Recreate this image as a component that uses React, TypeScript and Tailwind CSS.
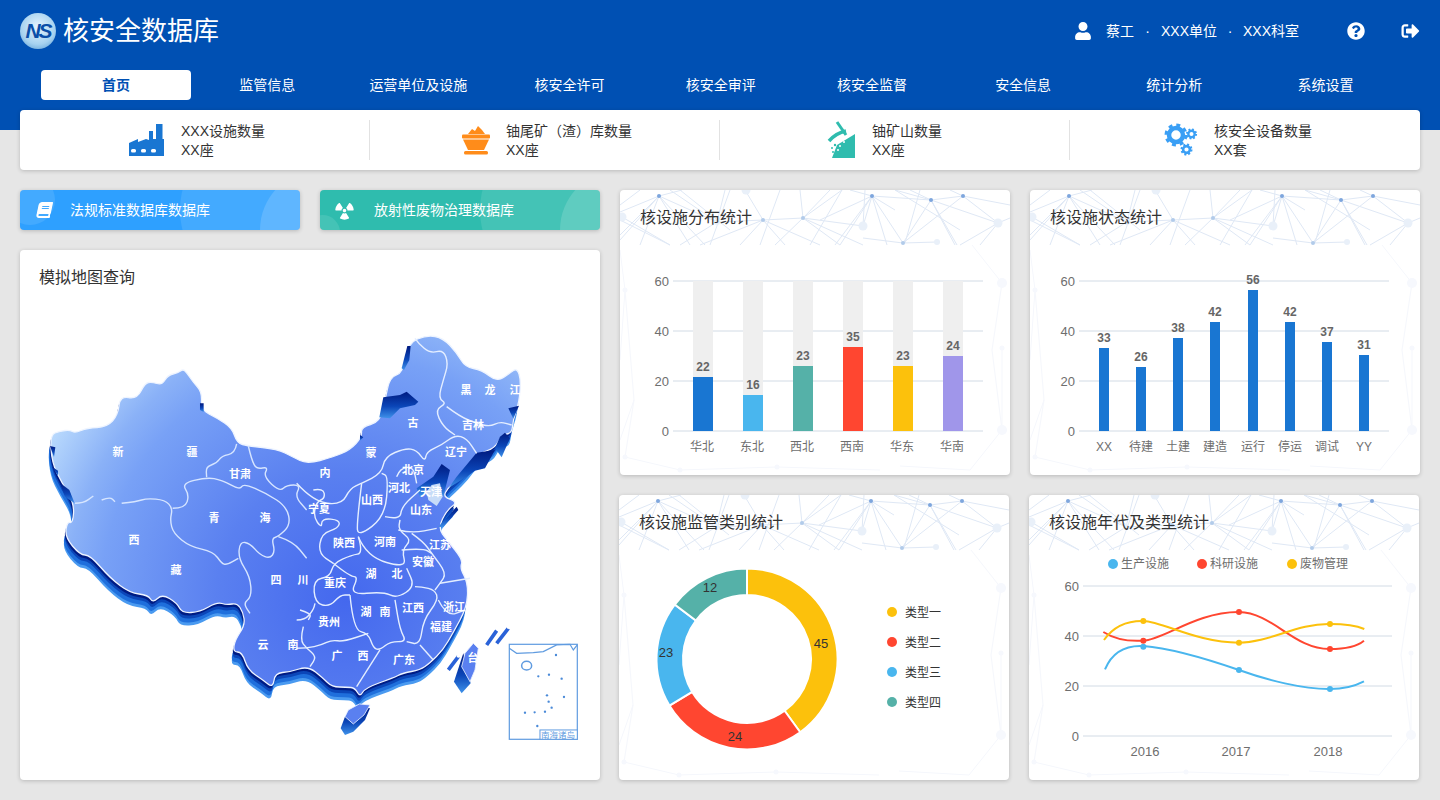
import { FaBook, FaQuestionCircle, FaRadiation, FaSignOutAlt, FaUser } from "react-icons/fa";

const navItems = ["首页", "监管信息", "运营单位及设施", "核安全许可", "核安全审评", "核安全监督", "安全信息", "统计分析", "系统设置"];

// map outline in page coordinates
const outline =
  "50,435 60,431 70,430 75,433 87,428 107,427 118,415 120,396 137,399 145,383 152,382 162,385 168,375 178,373 183,369 187,373 193,382 202,392 201,410 217,418 232,428 237,443 248,446 277,449 293,457 307,464 333,457 350,450 362,437 361,427 380,422 385,400 390,377 403,373 408,343 427,335 443,338 457,353 465,367 482,370 497,382 510,373 517,368 521,380 519,403 513,420 512,433 502,435 495,448 480,453 470,467 457,480 448,488 443,497 458,502 447,510 438,528 447,540 463,560 460,568 468,583 467,607 453,633 443,650 430,663 420,670 403,673 393,678 365,688 360,697 355,688 347,687 332,687 323,678 308,666 290,672 275,673 273,688 263,680 248,670 242,652 233,652 235,640 245,625 243,612 237,603 227,605 217,602 200,612 182,613 177,603 162,594 153,603 148,595 130,593 110,578 90,555 80,555 65,537 67,522 73,523 74,503 62,483 52,463";

const westLines = [
  "135,550 160,550 190,528",
  "215,540 240,530 255,545",
  "275,550 320,545 350,535 405,540 428,565 420,600 430,640 480,680 550,695 575,730 590,735 625,715",
  "428,565 465,565 478,525 455,490 530,472 575,480 630,510 640,490 710,520 770,560 782,615 745,650 725,655 735,695 720,715 690,705 660,670 630,665 625,715 660,770 665,830 640,850 660,880",
  "620,372 615,400 575,408 560,430 528,440 530,472",
  "655,378 665,420 680,448 715,440 700,470 750,515 770,495 812,495 795,530 830,570",
  "745,650 790,665 830,715",
];

const eastLines = [
  "-10,490 40,545 125,555 150,505 185,490 245,460 255,410 315,385 350,390 375,425 380,395 425,375 465,345 500,355 530,400",
  "345,55 355,70 390,100 430,90 445,130 430,180 415,235 440,250 405,270 430,320 465,345",
  "440,260 480,290 530,310 570,320 600,305 635,315",
  "40,510 70,505 75,535 50,545 40,590 65,625 65,595 120,600 115,625 65,640 55,700 100,730",
  "185,490 170,610 175,650 255,590 265,470 245,460",
  "255,590 300,600 305,560 360,510",
  "290,470 300,445 340,440 350,490",
  "175,650 190,700 155,705 100,730 90,770 40,780 45,850 90,860 120,825 150,825",
  "175,650 200,710 320,745 305,690 335,660 295,630 300,600",
  "295,630 335,640 410,625",
  "335,640 370,665 395,700 440,760 420,790 405,810",
  "305,690 370,685 395,700",
  "100,730 150,770 175,770 150,825 250,815 290,835 345,800 320,745",
  "345,800 365,800 405,810 415,840 370,900 360,975 320,965",
  "150,825 160,930 205,940 220,985 240,990 270,965 320,965 300,930 285,840",
  "420,790 510,775",
  "415,840 440,890 495,870",
  "360,975 400,1020",
  "240,990 170,1100",
  "-10,985 20,985 65,975 95,960 130,965 205,940",
  "-10,900 15,900 40,870 45,850",
  "0,870 35,880 25,900",
  "10,920 0,960 20,985 50,1010 30,1040",
];

// rounds the corners of a point list so borders read as drawn coast, not straight cuts
function smooth(points: string, closed = false) {
  const p = points.trim().split(/\s+/).map((s) => s.split(",").map(Number));
  const mid = (a: number[], b: number[]) => `${(a[0] + b[0]) / 2} ${(a[1] + b[1]) / 2}`;
  if (closed) {
    let d = `M${mid(p[p.length - 1], p[0])}`;
    p.forEach((pt, i) => {
      d += ` Q${pt[0]} ${pt[1]} ${mid(pt, p[(i + 1) % p.length])}`;
    });
    return d + " Z";
  }
  let d = `M${p[0][0]} ${p[0][1]}`;
  for (let i = 1; i < p.length - 1; i++) {
    d += ` Q${p[i][0]} ${p[i][1]} ${mid(p[i], p[i + 1])}`;
  }
  return d + ` L${p[p.length - 1][0]} ${p[p.length - 1][1]}`;
}

const labels: [string, number, number][] = [
  ["新", 118, 452], ["疆", 192, 452], ["甘肃", 240, 474], ["青", 214, 518], ["海", 265, 518], ["西", 134, 540], ["藏", 176, 570],
  ["四", 276, 580], ["川", 303, 580], ["内", 325, 473], ["蒙", 371, 453], ["古", 413, 423], ["黑", 466, 390], ["龙", 490, 390],
  ["江", 515, 390], ["吉林", 473, 425], ["辽宁", 456, 452], ["北京", 413, 470], ["河北", 399, 488], ["天津", 431, 492],
  ["山西", 372, 500], ["宁夏", 319, 509], ["山东", 421, 510], ["陕西", 344, 543], ["河南", 385, 542], ["江苏", 440, 545],
  ["安徽", 423, 562], ["湖", 371, 574], ["北", 397, 574], ["重庆", 335, 583], ["江西", 413, 608], ["湖", 366, 612], ["南", 385, 612],
  ["贵州", 329, 622], ["浙江", 454, 607], ["福建", 441, 627], ["云", 263, 645], ["南", 293, 645], ["广", 337, 656], ["西", 363, 656],
  ["广东", 404, 660], ["台", 473, 658],
];

const darkBays = [
  "M250,232 L300,225 L320,215 L355,245 L345,255 L300,265 L270,295 L238,292 Z",
  "M322,78 L332,78 L328,120 L312,150 L305,145 Z",
  "M180,345 L190,352 L180,362 Z",
  "M625,265 L657,257 L640,296 Z",
  "M600,350 L615,338 L630,355 L605,412 L585,385 Z",
  "M530,398 L585,390 L555,445 L525,452 L500,470 L445,505 L470,470 Z",
  "M350,505 L400,470 L425,432 L450,450 L430,530 L395,500 L360,530 Z",
  "M470,560 L475,570 L430,622 L415,620 Z",
];

const network: [number, number, number, number][] = [
  [39, 6, 0, 22], [39, 6, 62, 0], [39, 6, 97, 32], [39, 6, 70, 55], [39, 6, 20, 55], [97, 32, 143, 30], [143, 30, 183, 28], [143, 30, 125, 0],
  [143, 30, 165, 55], [143, 30, 120, 55], [183, 28, 180, 0], [183, 28, 222, 0], [183, 28, 243, 55], [183, 28, 155, 55], [252, 6, 230, 0],
  [252, 6, 311, 10], [252, 6, 220, 55], [252, 6, 283, 53], [311, 10, 343, 6], [311, 10, 283, 53], [311, 10, 275, 0], [311, 10, 335, 55],
  [311, 10, 378, 33], [343, 6, 378, 33], [343, 6, 330, 0], [378, 33, 340, 55], [378, 33, 390, 28], [243, 36, 183, 28], [243, 36, 252, 6],
  [2, 27, 50, 55], [97, 32, 60, 55], [97, 32, 50, 0], [283, 53, 243, 48], [283, 53, 317, 52], [0, 45, 39, 6], [222, 0, 190, 55], [97, 32, 105, 0],
  [39, 6, 0, 50], [39, 6, 85, 55], [143, 30, 80, 55], [143, 30, 200, 55], [183, 28, 220, 55], [252, 6, 215, 55], [252, 6, 267, 55],
  [343, 6, 283, 53], [311, 10, 290, 0], [311, 10, 337, 55], [378, 33, 360, 55], [343, 6, 390, 15], [252, 6, 200, 30], [183, 28, 210, 0],
  [252, 6, 275, 20], [275, 0, 340, 40], [60, 0, 110, 40], [20, 0, 0, 15], [0, 30, 50, 55], [110, 0, 90, 55], [160, 0, 140, 55],
  [245, 0, 243, 36], [300, 0, 285, 53],
];

const faintNetwork: [number, number, number, number][] = [
  [5, 100, 14, 210], [5, 100, 0, 170], [14, 210, 0, 250], [14, 210, 5, 267], [5, 267, 60, 280], [60, 280, 157, 277], [157, 277, 260, 280],
  [382, 93, 372, 160], [382, 93, 352, 55], [382, 158, 382, 240], [382, 240, 350, 280], [372, 160, 382, 240], [350, 280, 280, 276], [0, 60, 5, 100],
];

function Network() {
  return (
    <svg className="absolute inset-0 w-full h-full pointer-events-none" viewBox="0 0 390 285">
      {faintNetwork.map((l, i) => (
        <line key={i} x1={l[0]} y1={l[1]} x2={l[2]} y2={l[3]} stroke="#f5f7fc" strokeWidth="1" />
      ))}
      {[[382, 93], [382, 240], [382, 158], [5, 100], [60, 280], [157, 277], [5, 267]].map((p, i) => (
        <circle key={i} cx={p[0]} cy={p[1]} r={i < 2 ? 5 : 2.5} fill="#f6f8fd" />
      ))}
      {network.map((l, i) => (
        <line key={i} x1={l[0]} y1={l[1]} x2={l[2]} y2={l[3]} stroke="#dfe8f5" strokeWidth="1" />
      ))}
      {[[39, 6], [252, 6], [311, 10], [343, 6]].map((p, i) => (
        <circle key={i} cx={p[0]} cy={p[1]} r="2" fill="#7ea6dd" />
      ))}
      {[[143, 30], [183, 28], [283, 53]].map((p, i) => (
        <circle key={i} cx={p[0]} cy={p[1]} r="2" fill="#b2cbea" />
      ))}
      {[[243, 36], [378, 33], [126, 0], [2, 27], [317, 52], [97, 32]].map((p, i) => (
        <circle key={i} cx={p[0]} cy={p[1]} r={i < 4 ? 4.5 : 3} fill="#e9f0f9" />
      ))}
    </svg>
  );
}

function ChartCard({ title, children }: { title: string; children: React.ReactNode }) {
  return (
    <div className="relative h-[285px] bg-white rounded shadow-[0_1px_4px_rgba(0,0,0,0.2)] overflow-hidden">
      <Network />
      <h3 className="relative h-[55px] flex items-center pl-5 text-base text-[#333]">{title}</h3>
      <div className="relative">{children}</div>
    </div>
  );
}

function Axis({ x1, x2, ys }: { x1: number; x2: number; ys: [string, number][] }) {
  return (
    <g>
      {ys.map(([t, y]) => (
        <g key={t}>
          <line x1={x1} x2={x2} y1={y} y2={y} stroke="#d2dbe5" />
          <text x={x1 - 4} y={y + 4.5} textAnchor="end" fontSize="13" fill="#6e6e6e">{t}</text>
        </g>
      ))}
    </g>
  );
}

function DistributionChart() {
  const bars = [
    { name: "华北", v: "22", x: 693, top: 377, c: "#1976d2" },
    { name: "东北", v: "16", x: 743, top: 395, c: "#49b6ee" },
    { name: "西北", v: "23", x: 793, top: 366, c: "#55b1a8" },
    { name: "西南", v: "35", x: 843, top: 347, c: "#ff4630" },
    { name: "华东", v: "23", x: 893, top: 366, c: "#fcc10c" },
    { name: "华南", v: "24", x: 943, top: 356, c: "#a096ea" },
  ];
  return (
    <svg className="block" width="390" height="230" viewBox="620 245 390 230">
      <Axis x1={673} x2={983} ys={[["60", 281], ["40", 331], ["20", 381], ["0", 431]]} />
      {bars.map((b) => (
        <g key={b.name}>
          <rect x={b.x} y={281} width={20} height={150} fill="#efefef" />
          <rect x={b.x} y={b.top} width={20} height={431 - b.top} fill={b.c} />
          <text x={b.x + 10} y={b.top - 6} textAnchor="middle" fontSize="12" fontWeight="700" fill="#666">{b.v}</text>
          <text x={b.x + 9} y={451} textAnchor="middle" fontSize="12" fill="#6e6e6e">{b.name}</text>
        </g>
      ))}
    </svg>
  );
}

function StatusChart() {
  const bars = [
    { name: "XX", v: "33", x: 1099, top: 348 },
    { name: "待建", v: "26", x: 1136, top: 367 },
    { name: "土建", v: "38", x: 1173, top: 338 },
    { name: "建造", v: "42", x: 1210, top: 322 },
    { name: "运行", v: "56", x: 1248, top: 290 },
    { name: "停运", v: "42", x: 1285, top: 322 },
    { name: "调试", v: "37", x: 1322, top: 342 },
    { name: "YY", v: "31", x: 1359, top: 355 },
  ];
  return (
    <svg className="block" width="390" height="230" viewBox="1030 245 390 230">
      <Axis x1={1079} x2={1389} ys={[["60", 281], ["40", 331], ["20", 381], ["0", 431]]} />
      {bars.map((b) => (
        <g key={b.name}>
          <rect x={b.x} y={b.top} width={10} height={431 - b.top} fill="#1976d2" />
          <text x={b.x + 5} y={b.top - 6} textAnchor="middle" fontSize="12" fontWeight="700" fill="#666">{b.v}</text>
          <text x={b.x + 5} y={451} textAnchor="middle" fontSize="12" fill="#6e6e6e">{b.name}</text>
        </g>
      ))}
    </svg>
  );
}

function arc(a0: number, a1: number) {
  const cx = 747, cy = 659, R = 90.5, r = 64;
  const p = (rad: number, a: number) => {
    const t = (a * Math.PI) / 180;
    return `${(cx + rad * Math.sin(t)).toFixed(2)} ${(cy - rad * Math.cos(t)).toFixed(2)}`;
  };
  const large = a1 - a0 > 180 ? 1 : 0;
  return `M${p(R, a0)} A${R} ${R} 0 ${large} 1 ${p(R, a1)} L${p(r, a1)} A${r} ${r} 0 ${large} 0 ${p(r, a0)} Z`;
}

function DonutChart() {
  const segs = [
    { a: 0, b: 144, c: "#fcc10c" },
    { a: 144, b: 239, c: "#ff4630" },
    { a: 239, b: 307, c: "#49b6ee" },
    { a: 307, b: 360, c: "#55b1a8" },
  ];
  const values: [string, number, number][] = [["45", 821, 643], ["24", 735, 736], ["23", 666, 652], ["12", 710, 587]];
  const legend: [string, string, number][] = [["类型一", "#fcc10c", 612], ["类型二", "#ff4630", 642], ["类型三", "#49b6ee", 672], ["类型四", "#55b1a8", 702]];
  return (
    <svg className="block" width="390" height="230" viewBox="619 550 390 230">
      {segs.map((s) => (
        <path key={s.c} d={arc(s.a, s.b)} fill={s.c} stroke="#fff" strokeWidth="2" />
      ))}
      {values.map(([t, x, y]) => (
        <text key={t} x={x} y={y + 4.5} textAnchor="middle" fontSize="13" fill="#333">{t}</text>
      ))}
      {legend.map(([t, c, y]) => (
        <g key={t}>
          <circle cx={892} cy={y} r={5} fill={c} />
          <text x={905} y={y + 5} fontSize="12" fill="#333">{t}</text>
        </g>
      ))}
    </svg>
  );
}

function LineChart() {
  const legend: [string, string, number][] = [["生产设施", "#49b6ee", 1113], ["科研设施", "#ff4630", 1202], ["废物管理", "#fcc10c", 1292]];
  const lines = [
    { c: "#49b6ee", d: "M225,538 C245,490 285,465 340,468 C430,475 540,510 627,540 C710,570 820,598 900,597 C940,597 975,588 1002,574", pts: [[340, 470], [627, 540], [900, 597]] },
    { c: "#ff4630", d: "M220,426 C250,445 295,455 340,452 C400,450 500,365 627,366 C730,368 790,478 900,477 C945,477 980,470 1002,452", pts: [[340, 452], [627, 366], [900, 477]] },
    { c: "#fcc10c", d: "M222,450 C250,410 290,392 340,393 C400,395 500,458 627,458 C720,458 800,400 900,402 C945,402 975,405 1003,417", pts: [[340, 393], [627, 458], [900, 402]] },
  ];
  return (
    <svg className="block" width="390" height="230" viewBox="1029 550 390 230">
      <Axis x1={1083} x2={1392} ys={[["60", 586], ["40", 636], ["20", 686], ["0", 736]]} />
      {legend.map(([t, c, x]) => (
        <g key={t}>
          <circle cx={x} cy={564} r={5} fill={c} />
          <text x={x + 8} y={568} fontSize="12" fill="#6e6e6e">{t}</text>
        </g>
      ))}
      <g transform="translate(1030,490) scale(0.3333)">
        {lines.map((l) => (
          <g key={l.c}>
            <path d={l.d} fill="none" stroke={l.c} strokeWidth="6" />
            {l.pts.map((p) => (
              <circle key={p[0]} cx={p[0]} cy={p[1]} r="9" fill={l.c} />
            ))}
          </g>
        ))}
      </g>
      {[["2016", 1145], ["2017", 1236], ["2018", 1328]].map(([t, x]) => (
        <text key={t} x={x} y={756} textAnchor="middle" fontSize="13" fill="#6e6e6e">{t}</text>
      ))}
    </svg>
  );
}

function ChinaMap() {
  const land = smooth(outline, true);
  return (
    <svg className="block" width="580" height="475" viewBox="20 305 580 475">
      <defs>
        <radialGradient id="land" gradientUnits="userSpaceOnUse" cx="345" cy="600" r="340">
          <stop offset="0" stopColor="#4468ee" />
          <stop offset="0.38" stopColor="#5a80f0" />
          <stop offset="0.72" stopColor="#78a1f6" />
          <stop offset="0.82" stopColor="#8ab1f7" />
          <stop offset="1" stopColor="#bcdcfd" />
        </radialGradient>
        <linearGradient id="bay" x1="0" y1="0" x2="0" y2="1">
          <stop offset="0" stopColor="#001a80" />
          <stop offset="0.55" stopColor="#0b46b8" />
          <stop offset="1" stopColor="#3f92ea" />
        </linearGradient>
      </defs>
      <path d={land} transform="translate(-2,13)" fill="#4a9af0" />
      <path d={land} transform="translate(-2,10)" fill="#1f6fdc" />
      <path d={land} transform="translate(-1,6)" fill="#0b46b8" />
      <path d={land} transform="translate(-1,3)" fill="#001c84" />
      <path d={land} fill="url(#land)" stroke="#eef4ff" strokeWidth="1.3" strokeLinejoin="round" />
      {/* small dark notches along the west edge */}
      <g transform="translate(30,320) scale(0.3333)" fill="url(#bay)">
        <path d="M60,378 L76,382 L72,412 Z" />
        <path d="M66,440 L84,452 L84,468 Z" />
        <path d="M90,488 L118,510 L134,550 L105,530 Z" />
        <path d="M510,250 L521,250 L521,276 L510,270 Z" />
      </g>
      <g transform="translate(30,320) scale(0.3333)" fill="none" stroke="#d6e5ff" strokeWidth="4.2" strokeLinejoin="round">
        {westLines.map((d) => (
          <path key={d} d={smooth(d)} />
        ))}
      </g>
      <g transform="translate(300,320) scale(0.3333)">
        {darkBays.map((d) => (
          <path key={d} d={d} fill="url(#bay)" />
        ))}
        <path d="M395,495 L420,490 L428,530 L410,558 L385,540 L380,515 Z" fill="#c7dcf8" />
        <g fill="none" stroke="#e4eeff" strokeWidth="4.2" strokeLinejoin="round">
          {eastLines.map((d) => (
            <path key={d} d={smooth(d)} />
          ))}
        </g>
        {/* hainan */}
        <path d="M135,1190 L178,1160 L210,1165 L195,1200 L160,1235 L135,1245 L122,1225 Z" fill="url(#bay)" />
        <path d="M145,1170 L178,1152 L210,1155 L192,1185 L160,1212 L135,1190 Z" fill="#5a80f0" stroke="#eaf2ff" strokeWidth="2.5" />
        {/* taiwan and islets */}
        <path d="M490,1000 L462,1085 L485,1120 L512,1090 Z" fill="url(#bay)" />
        <path d="M520,970 L535,985 L525,1050 L510,1085 L485,1040 L495,1000 Z" fill="#5a80f0" stroke="#eaf2ff" strokeWidth="2.5" />
        <path d="M560,975 L590,932 M590,970 L625,925 M445,1050 L475,1010" stroke="#2a62d8" strokeWidth="11" fill="none" />
        <path d="M590,930 L594,926 M622,925 L626,921 M472,1012 L477,1007" stroke="#fff" strokeWidth="7" />
        {/* south china sea inset */}
        <rect x="628" y="973" width="204" height="285" fill="#fff" stroke="#5f9be0" strokeWidth="3.6" />
        <path d="M628,985 L650,1000 L700,998 L730,995 L770,975 L810,973 L820,990 L832,975" fill="none" stroke="#5f9be0" strokeWidth="3.6" />
        <ellipse cx="680" cy="1037" rx="15" ry="13" fill="none" stroke="#5f9be0" strokeWidth="4.5" />
        {[[768, 1005], [715, 1069], [747, 1064], [785, 1076], [741, 1126], [792, 1131], [746, 1145], [755, 1163], [735, 1175], [704, 1177], [675, 1178], [712, 1218]].map((p) => (
          <circle key={p[0] + "-" + p[1]} cx={p[0]} cy={p[1]} r="3.5" fill="#4a8ad8" />
        ))}
        <rect x="720" y="1230" width="112" height="28" fill="#fff" stroke="#5f9be0" strokeWidth="3" />
      </g>
      <text x="558" y="737.5" textAnchor="middle" fontSize="8.5" fill="#5f9be0">南海诸岛</text>
      {labels.map(([t, x, y]) => (
        <text key={t + x} x={x} y={y + 4} textAnchor="middle" fontSize="11" fontWeight="700" fill="#fff">{t}</text>
      ))}
    </svg>
  );
}

function FactoryIcon() {
  return (
    <svg width="35" height="32" viewBox="0 0 35 32" fill="#1976d2">
      <path d="M0 32 V19 L9 15 V18 L17 15 L20 16 V7 H24 V15 H27 V0 H33.5 V15 H35 V32 Z" />
      <rect x="2" y="25" width="5" height="3.5" rx="1.5" fill="#fff" />
      <rect x="12" y="25" width="5" height="3.5" rx="1.5" fill="#fff" />
      <rect x="22" y="25" width="5" height="3.5" rx="1.5" fill="#fff" />
    </svg>
  );
}

function CartIcon() {
  return (
    <svg width="30" height="32" viewBox="0 0 30 30" fill="#ff8c1a">
      <path d="M7 9 L11 4 L14 6 L17 1 L21 5 L24 9 Z" />
      <rect x="1" y="9.5" width="28" height="4" rx="1" />
      <path d="M2 14.5 H28 L23 25 H7 Z" />
      <rect x="3" y="26" width="24" height="3.5" rx="1.5" />
    </svg>
  );
}

function MineIcon() {
  return (
    <svg width="30" height="40" viewBox="12 5 30 40" fill="#2fbcae">
      <path d="M40 19 V43 H17 L22 30 Z" />
      <path d="M22 7 L31 20" stroke="#2fbcae" strokeWidth="3" />
      <path d="M14 26 Q21 18 31 16" stroke="#2fbcae" strokeWidth="3.5" fill="none" />
      <g fill="#fff">
        <circle cx="25" cy="31" r="1" />
        <circle cx="29" cy="27" r="1" />
        <circle cx="23" cy="35" r="1" />
      </g>
      <circle cx="20" cy="30" r="1.2" />
      <circle cx="17" cy="33" r="1" />
      <circle cx="18" cy="37" r="1" />
    </svg>
  );
}

function Gear({ x, y, r, w }: { x: number; y: number; r: number; w: number }) {
  const tooth = (2 * Math.PI * (r + w * 0.5)) / 16;
  return (
    <g fill="none" stroke="#3a9ff5">
      <circle cx={x} cy={y} r={r} strokeWidth={w} />
      <circle cx={x} cy={y} r={r + w * 0.5} strokeWidth={w} strokeDasharray={`${tooth} ${tooth}`} />
    </g>
  );
}

function GearsIcon() {
  return (
    <svg width="34" height="34" viewBox="0 0 34 34">
      <Gear x={12} y={12} r={7} w={4.5} />
      <Gear x={27.5} y={11} r={3.2} w={2.4} />
      <Gear x={22.5} y={26.5} r={3.4} w={2.6} />
    </svg>
  );
}

function Stat({ pad, gap, icon, line1, line2 }: { pad: string; gap: string; icon: React.ReactNode; line1: string; line2: string }) {
  return (
    <div className={`w-[350px] shrink-0 h-10 flex items-center ${pad} ${gap} border-r border-[#e2e2e2] last:border-r-0`}>
      {icon}
      <div className="pt-0.5 text-sm leading-[19px] text-[#333]">
        <div>{line1}</div>
        <div>{line2}</div>
      </div>
    </div>
  );
}

export default function App() {
  return (
    <div className="h-[800px] overflow-hidden bg-[#e6e6e6] font-['Liberation_Sans','Noto_Sans_CJK_SC',sans-serif]">
      <header className="h-[130px] bg-[#0050b3] text-white">
        <div className="h-[62px] flex items-center pl-5 pr-5">
          <div className="w-9 h-9 rounded-full bg-[radial-gradient(circle_at_50%_40%,#e8f5fe,#a6d2f0_60%,#4a92cf)] flex items-center justify-center text-[21px] font-bold italic tracking-[-2px] text-[#0a4ea8]">
            NS
          </div>
          <div className="ml-[7px] text-[26px]">核安全数据库</div>
          <div className="ml-auto flex items-center text-sm">
            <FaUser className="w-4 h-[18px]" />
            <span className="ml-[15px]">蔡工</span>
            <span className="w-[27px] text-center">·</span>
            <span>XXX单位</span>
            <span className="w-[26px] text-center">·</span>
            <span>XXX科室</span>
            <FaQuestionCircle className="ml-12 w-[18px] h-[18px]" />
            <FaSignOutAlt className="ml-9 w-[19px] h-[18px]" />
          </div>
        </div>
        <nav className="pl-[41px] pt-2 flex text-sm">
          {navItems.map((item, i) => (
            <div key={item} className="w-[151.2px]">
              <div className={`w-[150px] h-[30px] flex items-center justify-center rounded ${i === 0 ? "bg-white text-[#0050b3] font-bold" : ""}`}>
                {item}
              </div>
            </div>
          ))}
        </nav>
      </header>

      <section className="relative mx-5 -mt-5 h-[60px] flex items-center bg-white rounded shadow-[0_1px_4px_rgba(0,0,0,0.2)]">
        <Stat pad="pl-[109px]" gap="gap-[17px]" icon={<FactoryIcon />} line1="XXX设施数量" line2="XX座" />
        <Stat pad="pl-[91px]" gap="gap-[15px]" icon={<CartIcon />} line1="铀尾矿（渣）库数量" line2="XX座" />
        <Stat pad="pl-[107px]" gap="gap-[15px]" icon={<MineIcon />} line1="铀矿山数量" line2="XX座" />
        <Stat pad="pl-[94px]" gap="gap-4" icon={<GearsIcon />} line1="核安全设备数量" line2="XX套" />
      </section>

      <main className="flex gap-5 px-5 pt-5">
        <div className="w-[580px] flex flex-col gap-5">
          <div className="flex gap-5 text-sm text-white">
            <div className="relative w-[280px] h-10 flex items-center pl-[50px] rounded bg-[#2ea0ff] shadow-[0_1px_4px_rgba(0,0,0,0.2)] overflow-hidden">
              <div className="absolute left-[-15px] top-[-15px] w-[50px] h-[50px] rounded-full bg-white/10" />
              <div className="absolute left-[160px] top-[-60px] w-[160px] h-[160px] rounded-full bg-white/10" />
              <div className="absolute left-[240px] top-[-20px] w-[120px] h-[120px] rounded-full bg-white/15" />
              <FaBook className="absolute left-[17px] top-[12px] w-[15px] h-4 -skew-x-12" />
              <span className="relative">法规标准数据库数据库</span>
            </div>
            <div className="relative w-[280px] h-10 flex items-center pl-[54px] rounded bg-[#2fbcae] shadow-[0_1px_4px_rgba(0,0,0,0.2)] overflow-hidden">
              <div className="absolute left-[-15px] top-[25px] w-[35px] h-[35px] rounded-full bg-white/10" />
              <div className="absolute left-[160px] top-[-60px] w-[160px] h-[160px] rounded-full bg-white/10" />
              <div className="absolute left-[240px] top-[-20px] w-[120px] h-[120px] rounded-full bg-white/15" />
              <FaRadiation className="absolute left-[15px] top-[11px] w-[19px] h-[19px]" />
              <span className="relative">放射性废物治理数据库</span>
            </div>
          </div>
          <div className="h-[530px] bg-white rounded shadow-[0_1px_4px_rgba(0,0,0,0.2)]">
            <h3 className="h-[55px] pt-px flex items-center pl-[19px] text-base text-[#333]">模拟地图查询</h3>
            <ChinaMap />
          </div>
        </div>
        <div className="w-[800px] flex flex-col gap-5">
          <div className="grid grid-cols-2 gap-5">
            <ChartCard title="核设施分布统计"><DistributionChart /></ChartCard>
            <ChartCard title="核设施状态统计"><StatusChart /></ChartCard>
          </div>
          <div className="grid grid-cols-2 gap-5 -ml-px mr-px">
            <ChartCard title="核设施监管类别统计"><DonutChart /></ChartCard>
            <ChartCard title="核设施年代及类型统计"><LineChart /></ChartCard>
          </div>
        </div>
      </main>
    </div>
  );
}
